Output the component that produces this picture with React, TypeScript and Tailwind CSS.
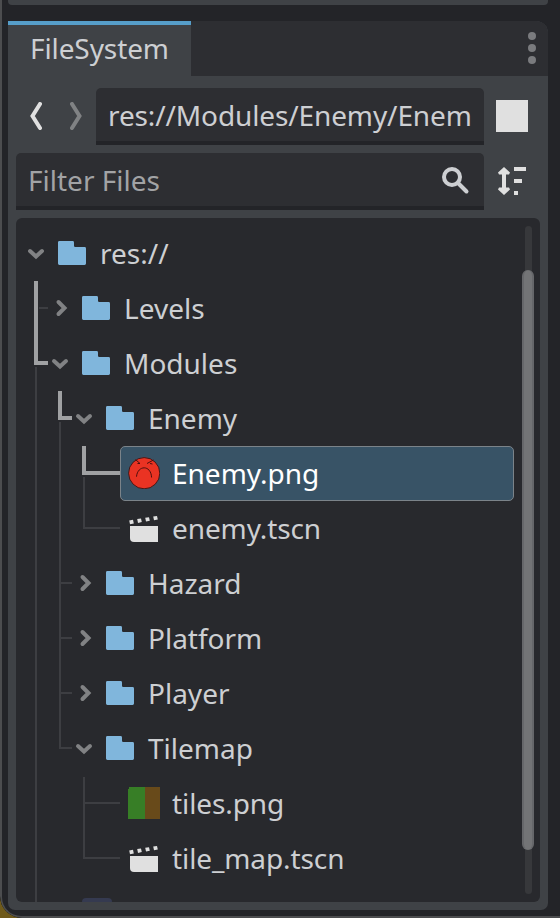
import React from "react";

type Kind = "folder" | "scene" | "enemy" | "tiles";
type Item = {
  name: string;
  kind: Kind;
  indent: string;
  open?: boolean;
  selected?: boolean;
};

const items: Item[] = [
  { name: "res://", kind: "folder", indent: "pl-3", open: true },
  { name: "Levels", kind: "folder", indent: "pl-9", open: false },
  { name: "Modules", kind: "folder", indent: "pl-9", open: true },
  { name: "Enemy", kind: "folder", indent: "pl-15", open: true },
  { name: "Enemy.png", kind: "enemy", indent: "pl-[104px]", selected: true },
  { name: "enemy.tscn", kind: "scene", indent: "pl-[104px]" },
  { name: "Hazard", kind: "folder", indent: "pl-15", open: false },
  { name: "Platform", kind: "folder", indent: "pl-15", open: false },
  { name: "Player", kind: "folder", indent: "pl-15", open: false },
  { name: "Tilemap", kind: "folder", indent: "pl-15", open: true },
  { name: "tiles.png", kind: "tiles", indent: "pl-[104px]" },
  { name: "tile_map.tscn", kind: "scene", indent: "pl-[104px]" },
];

function ItemIcon({ kind }: { kind: Kind }) {
  if (kind === "folder") {
    return (
      <svg className="size-8 shrink-0" viewBox="0 0 16 16" fill="#80b6dc">
        <path d="M1.7 2A.7.7 0 0 0 1 2.7v10.6a.7.7 0 0 0 .7.7h12.6a.7.7 0 0 0 .7-.7V5.7a.7.7 0 0 0-.7-.7H9.6a.6.6 0 0 1-.6-.6V2.7A.7.7 0 0 0 8.3 2z" />
      </svg>
    );
  }
  if (kind === "scene") {
    return (
      <svg className="size-8 shrink-0" viewBox="0 0 32 32" fill="#e0e0e0">
        <path d="M2 14h28v16H6a4 4 0 0 1-4-4z" />
        <path d="M1.200 8.400l3.800-.6 .8 3.600-3.800 .8zM9.200 7.100l3.800-.6 .8 3.600-3.800 .8zM17.200 5.800l3.800-.6 .8 3.600-3.800 .8zM25.200 4.500l3.800-.6 .8 3.600-3.800 .8z" />
      </svg>
    );
  }
  if (kind === "tiles") {
    return (
      <svg className="size-8 shrink-0" viewBox="0 0 32 32">
        <path d="M1 0h16v32H0V2h1z" fill="#377e26" />
        <path d="M17 0h15v32H17z" fill="#684a1a" />
      </svg>
    );
  }
  return (
    <svg className="size-8 shrink-0" viewBox="0 0 32 32" fill="none">
      <circle cx="16.2" cy="16.2" r="15.6" fill="#ea3323" stroke="#2a0f10" strokeWidth="0.8" />
      <path d="M7.500 2.500l4.500 4M9.500 6.500l2.500 0M25.500 3l-6.500 3.500M22 6.500l2.500 .5M8.500 19.700C9.500 8 23 7.500 23.600 20.500" stroke="#4c0f0e" strokeWidth="1" />
    </svg>
  );
}

function Chevron({ open }: { open?: boolean }) {
  return (
    <svg className="mt-2 mr-3 h-4 w-4 shrink-0 overflow-visible" viewBox="0 0 16 16" fill="none" stroke="#818284" strokeWidth="4" strokeLinecap="round" strokeLinejoin="miter">
      {open ? <path d="M2 6l6 5.500 6-5.500" /> : <path d="M6.500 2l6 6-6 6" />}
    </svg>
  );
}

function Row({ item }: { item: Item }) {
  const folder = item.kind === "folder";
  return (
    <li className={`flex h-[55px] ${item.indent}`}>
      <div
        className={`flex flex-1 items-start ${
          item.selected
            ? "rounded-[5px] border border-[#7b8389] bg-[#385366] pt-[10px] pl-[7px] text-white"
            : folder
              ? "pt-[11px] text-[#cdcfd2]"
              : "pt-[11px] pl-2 tracking-[-0.1px] text-[#cdcfd2]"
        }`}
      >
        {folder && <Chevron open={item.open} />}
        <ItemIcon kind={item.kind} />
        <span className="ml-3 leading-8">{item.name}</span>
      </div>
    </li>
  );
}

function TreeLines() {
  return (
    <svg className="pointer-events-none absolute inset-0" width="524" height="684" fill="none">
      <g stroke="#3d3e42" strokeWidth="2">
        <path d="M23 90h9M20 149v535" />
        <path d="M44 204v327M44 365h12M44 420h12M44 475h12M43 530h13" />
        <path d="M68 259v51h36M68 559v81h36M68 585h36" />
      </g>
      <g stroke="#a0a1a3" strokeWidth="4">
        <path d="M20 63v82h12" />
        <path d="M44 173v27h12" />
        <path d="M68 228v27h36" />
      </g>
    </svg>
  );
}

export default function App() {
  return (
    <div className="h-[918px] w-[560px] overflow-hidden bg-[#6f5a1b] font-['Noto_Sans',sans-serif] text-[28px] text-[#cdcfd2]">
      <div className="h-full overflow-hidden rounded-bl-[22px] bg-black">
        <div className="flex h-full flex-col overflow-hidden rounded-bl-[21px] border-b-2 border-l-2 border-[#4c4d4f] bg-[#232428] pr-3 pl-1.5">
          <div className="h-[5px] shrink-0 rounded-b bg-[#3f4246]" />
          <section className="mt-4 flex h-[889px] shrink-0 flex-col rounded-tr-xl rounded-b-[7px] bg-[#3f4246]">
            <header className="flex h-[55px] shrink-0 justify-between rounded-tr-xl bg-[#2d2e32]">
              <div className="w-[183px] border-t-4 border-[#569eca] bg-[#3f4246] pl-[22px] leading-[46px] tracking-[-0.1px]">FileSystem</div>
              <svg className="mt-[11px] mr-3" width="8" height="32" fill="#7a7b7e">
                <circle cx="4" cy="4" r="4" />
                <circle cx="4" cy="16" r="4" />
                <circle cx="4" cy="28" r="4" />
              </svg>
            </header>
            <div className="flex flex-1 flex-col gap-2 px-2 pt-3 pb-2">
              <div className="flex h-[57px] shrink-0">
                <div className="flex w-20 items-start gap-[28px] pt-[14px] pl-[14px]">
                  <svg width="12" height="28" fill="none" stroke="#e0e0e0" strokeWidth="4" strokeLinecap="round">
                    <path d="M10 2L2.500 14 10 26" />
                  </svg>
                  <svg width="12" height="28" fill="none" stroke="#808284" strokeWidth="4" strokeLinecap="round">
                    <path d="M2 2l7.500 12L2 26" />
                  </svg>
                </div>
                <div className="w-[388px] overflow-hidden rounded-t-[5px] border-b-4 border-[#232428] bg-[#2d2e32] pl-3 leading-[55px] tracking-[-0.12px] whitespace-nowrap">res://Modules/Enemy/Enem</div>
                <div className="mt-3 ml-3 size-8 bg-[#e0e0e0]" />
              </div>
              <div className="flex h-[57px] shrink-0">
                <div className="flex w-[468px] justify-between rounded-t-[5px] border-b-4 border-[#232428] bg-[#2d2e32] pr-[14px] pl-3 leading-[55px] text-[#a2a3a5]">
                  <span>Filter Files</span>
                  <svg className="mt-[13px]" width="29" height="30" fill="none" stroke="#cdcfd2" strokeWidth="4" strokeLinecap="round">
                    <circle cx="11" cy="11" r="8" />
                    <path d="M17 17l8.500 8.500" />
                  </svg>
                </div>
                <svg className="mt-[14px] ml-[14px]" width="28" height="28" fill="#e0e0e0">
                  <path d="M6 0l6 5.500-1 2H8v13h3l1 2L6 28 0 22.500l1-2h3v-13H1l-1-2z" />
                  <path d="M16 0h12v4H16zM16 12h8v4h-8zM16 24h4v4h-4z" />
                </svg>
              </div>
              <div className="relative flex h-[684px] shrink-0 overflow-hidden rounded-[6px] bg-[#28292d] pt-2">
                <TreeLines />
                <ul className="relative w-[498px]">
                  {items.map((item) => (
                    <Row key={item.name} item={item} />
                  ))}
                  <li className="pt-3 pl-[66px]">
                    <div className="h-5 w-[30px] rounded-t-sm bg-[#353a50]" />
                  </li>
                </ul>
                <div className="ml-2 flex h-[668px] w-3 justify-center">
                  <div className="flex h-full w-[7px] justify-center rounded-full bg-[#37383b]">
                    <div className="mt-11 h-[580px] w-3 shrink-0 rounded-full border-x-2 border-[#66676a] bg-[#737476]" />
                  </div>
                </div>
              </div>
            </div>
          </section>
        </div>
      </div>
    </div>
  );
}
